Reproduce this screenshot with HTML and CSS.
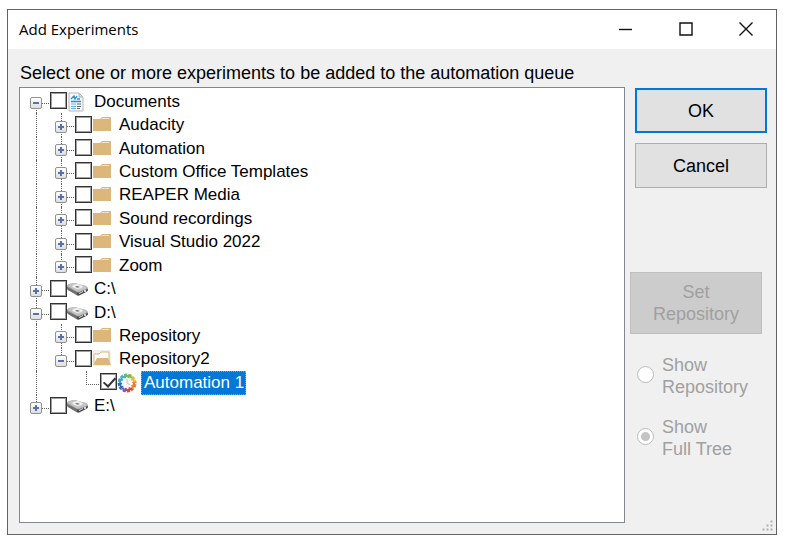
FILE: index.html
```
<!DOCTYPE html>
<html lang="en">
<head>
    <meta charset="UTF-8">
    <meta name="viewport" content="width=device-width, initial-scale=1.0">
    <title>Add Experiments</title>
    <link rel="stylesheet" href="styles.css">
</head>
<body>
    <svg class="sprite" aria-hidden="true">
        <symbol id="folder" viewBox="0 0 18 16">
            <path fill="#dcb67a" d="M0 3h7l2-2h9v14H0z"/>
            <path fill="#f3e3c6" d="M9 2h7v1H8z"/>
        </symbol>
        <symbol id="folder-open" viewBox="0 0 18 16">
            <path fill="#f0eff1" d="M0 0h18v16H0z"/>
            <path fill="#fff" stroke="#dcb67a" d="M1 13V4h5l2-2h8v11"/>
            <path fill="#dcb67a" d="M4 8h11l3 7H0z"/>
        </symbol>
        <symbol id="document" viewBox="0 0 16 20">
            <path fill="#f7f9fa" stroke="#b3b7ba" d="M1 1h10l4 4v14H1z"/>
            <path fill="#d9dcdf" stroke="#b3b7ba" d="M11 1v4h4z"/>
            <path fill="none" stroke="#1e90e0" stroke-width="1.3" d="M3 7l3-3 1 3 2-3M9 7h3M3 9.500h10"/>
            <path fill="none" stroke="#5eb4ee" d="M3 12h5M3 14.500h5M3 16.500h5"/>
            <path fill="none" stroke="#5b6a74" d="M9 12h4M9 14.500h4M9 16.500h3"/>
        </symbol>
        <symbol id="drive" viewBox="0 0 21 14">
            <path fill="#a2a2a2" d="M0 4q0-1 2-2l5-1q2 0 4 1l8 2q2 1 2 3v1q0 1-2 2l-6 3q-2 1-4 0L1 8Q0 7 0 6z"/>
            <path fill="#4c4c4c" d="M10 10q1 1 3 0l8-3v1q0 1-2 2l-6 3q-2 1-3 0z"/>
            <path fill="#6f6f6f" d="M0 5l10 5v3L1 8Q0 7 0 6z"/>
            <path fill="#c4c4c4" d="M1 4q0-1 2-2l5-1 3 1 8 2q2 1 0 3l-6 2q-2 1-4 0z"/>
            <path fill="#efefef" d="M5 4q2-2 5-2 5 1 6 3-2 2-6 2-4-1-5-3z"/>
            <path fill="#8a8a8a" d="M8 4h3l2 1-3 1z"/>
            <path fill="#dedede" d="M12 11l4-2v1l-4 2z"/>
            <circle fill="#fff" cx="18" cy="9" r="1"/>
        </symbol>
        <symbol id="gear" viewBox="0 0 20 20">
            <g fill="none" stroke-width="5">
                <path stroke="#7dbb42" d="M9 3a7 7 0 0 1 6 2"/>
                <path stroke="#f4b52e" d="M15 5a7 7 0 0 1 2 4"/>
                <path stroke="#ef7f2d" d="M17 9a7 7 0 0 1-2 6"/>
                <path stroke="#d9482f" d="M15 15a7 7 0 0 1-5 2"/>
                <path stroke="#8a56a4" d="M10 17a7 7 0 0 1-5-2"/>
                <path stroke="#2f6db5" d="M5 15a7 7 0 0 1-2-5"/>
                <path stroke="#3f9fe0" d="M3 10a7 7 0 0 1 2-5"/>
                <path stroke="#45b5b0" d="M5 5a7 7 0 0 1 4-2"/>
            </g>
            <circle cx="10" cy="10" r="9" fill="none" stroke="#fff" stroke-width="2" stroke-dasharray="1.300 3.412"/>
            <circle cx="10" cy="10" r="5" fill="#f6f6f6"/>
            <circle cx="10" cy="10" r="5" fill="none" stroke="#fff" stroke-width="2" stroke-dasharray="1.500 1.640"/>
            <path stroke="#c4c4c4" fill="none" d="M10 6v4l3 2"/>
        </symbol>
    </svg>

    <div class="window">
        <header class="titlebar">
            <h1>Add Experiments</h1>
            <div class="window-buttons">
                <button type="button" aria-label="Minimize"><svg width="14" height="14"><path d="M0 7.500h13"/></svg></button>
                <button type="button" aria-label="Maximize"><svg width="14" height="14"><path d="M1 1h12v12H1z"/></svg></button>
                <button type="button" aria-label="Close"><svg width="14" height="14"><path d="M0.500 0.500l13 13M13.500 0.500l-13 13"/></svg></button>
            </div>
        </header>

        <main class="content">
            <p class="prompt" id="prompt">Select one or more experiments to be added to the automation queue</p>

            <div class="columns">
                <div class="tree-box">
                    <ul class="tree" aria-labelledby="prompt">
                        <li>
                            <span class="rail first"><button type="button" class="toggle open" aria-label="Collapse"></button></span>
                            <label><input type="checkbox"><svg class="icon"><use href="#document" x="1" width="16" height="20"/></svg><span class="name">Documents</span></label>
                        </li>
                        <li>
                            <span class="rail pass"></span>
                            <span class="rail"><button type="button" class="toggle" aria-label="Expand"></button></span>
                            <label><input type="checkbox"><svg class="icon"><use href="#folder" x="1" y="1" width="18" height="16"/></svg><span class="name">Audacity</span></label>
                        </li>
                        <li>
                            <span class="rail pass"></span>
                            <span class="rail"><button type="button" class="toggle" aria-label="Expand"></button></span>
                            <label><input type="checkbox"><svg class="icon"><use href="#folder" x="1" y="1" width="18" height="16"/></svg><span class="name">Automation</span></label>
                        </li>
                        <li>
                            <span class="rail pass"></span>
                            <span class="rail"><button type="button" class="toggle" aria-label="Expand"></button></span>
                            <label><input type="checkbox"><svg class="icon"><use href="#folder" x="1" y="1" width="18" height="16"/></svg><span class="name">Custom Office Templates</span></label>
                        </li>
                        <li>
                            <span class="rail pass"></span>
                            <span class="rail"><button type="button" class="toggle" aria-label="Expand"></button></span>
                            <label><input type="checkbox"><svg class="icon"><use href="#folder" x="1" y="1" width="18" height="16"/></svg><span class="name">REAPER Media</span></label>
                        </li>
                        <li>
                            <span class="rail pass"></span>
                            <span class="rail"><button type="button" class="toggle" aria-label="Expand"></button></span>
                            <label><input type="checkbox"><svg class="icon"><use href="#folder" x="1" y="1" width="18" height="16"/></svg><span class="name">Sound recordings</span></label>
                        </li>
                        <li>
                            <span class="rail pass"></span>
                            <span class="rail"><button type="button" class="toggle" aria-label="Expand"></button></span>
                            <label><input type="checkbox"><svg class="icon"><use href="#folder" x="1" y="1" width="18" height="16"/></svg><span class="name">Visual Studio 2022</span></label>
                        </li>
                        <li>
                            <span class="rail pass"></span>
                            <span class="rail last"><button type="button" class="toggle" aria-label="Expand"></button></span>
                            <label><input type="checkbox"><svg class="icon"><use href="#folder" x="1" y="1" width="18" height="16"/></svg><span class="name">Zoom</span></label>
                        </li>
                        <li>
                            <span class="rail"><button type="button" class="toggle" aria-label="Expand"></button></span>
                            <label><input type="checkbox"><svg class="icon"><use href="#drive" y="3" width="21" height="14"/></svg><span class="name">C:\</span></label>
                        </li>
                        <li>
                            <span class="rail"><button type="button" class="toggle open" aria-label="Collapse"></button></span>
                            <label><input type="checkbox"><svg class="icon"><use href="#drive" y="3" width="21" height="14"/></svg><span class="name">D:\</span></label>
                        </li>
                        <li>
                            <span class="rail pass"></span>
                            <span class="rail"><button type="button" class="toggle" aria-label="Expand"></button></span>
                            <label><input type="checkbox"><svg class="icon"><use href="#folder" x="1" y="1" width="18" height="16"/></svg><span class="name">Repository</span></label>
                        </li>
                        <li>
                            <span class="rail pass"></span>
                            <span class="rail last"><button type="button" class="toggle open" aria-label="Collapse"></button></span>
                            <label><input type="checkbox"><svg class="icon"><use href="#folder-open" x="1" y="1" width="18" height="16"/></svg><span class="name">Repository2</span></label>
                        </li>
                        <li>
                            <span class="rail pass"></span>
                            <span class="rail blank"></span>
                            <span class="rail last"></span>
                            <label><input type="checkbox" checked><svg class="icon"><use href="#gear" width="20" height="20"/></svg><span class="name selected">Automation 1</span></label>
                        </li>
                        <li>
                            <span class="rail last"><button type="button" class="toggle" aria-label="Expand"></button></span>
                            <label><input type="checkbox"><svg class="icon"><use href="#drive" y="3" width="21" height="14"/></svg><span class="name">E:\</span></label>
                        </li>
                    </ul>
                </div>

                <div class="side">
                    <div class="actions">
                        <button type="button" class="btn default">OK</button>
                        <button type="button" class="btn">Cancel</button>
                    </div>
                    <button type="button" class="btn set-repository" disabled>Set<br>Repository</button>
                    <div class="view-options">
                        <label><input type="radio" name="view" disabled><span>Show<br>Repository</span></label>
                        <label><input type="radio" name="view" checked disabled><span>Show<br>Full Tree</span></label>
                    </div>
                </div>
            </div>
        </main>

        <svg class="grip" width="12" height="12" aria-hidden="true">
            <path d="M8 0h3v3H8zM4 4h3v3H4zM8 4h3v3H8zM0 8h3v3H0zM4 8h3v3H4zM8 8h3v3H8z"/>
        </svg>
    </div>
</body>
</html>
```
FILE: styles.css
```
* {
    box-sizing: border-box;
}
body {
    margin: 0;
    min-height: 100vh;
    padding: 9px 9px 6px 7px;
    display: flex;
    background-color: #fff;
    color: #000;
    font-family: "Liberation Sans", Arial, sans-serif;
    font-size: 17px;
    line-height: 22px;
}
button {
    font: inherit;
    color: inherit;
}
.sprite {
    position: absolute;
    width: 0;
    height: 0;
}
.window {
    position: relative;
    flex: 1;
    display: flex;
    flex-direction: column;
    border: 1px solid #646464;
    background-color: #f0f0f0;
}
.titlebar {
    display: flex;
    justify-content: space-between;
    height: 39px;
    padding-left: 11px;
    background-color: #fff;
}
.titlebar h1 {
    margin: 0;
    font-family: "Open Sans", "Noto Sans", sans-serif;
    font-size: 15px;
    font-weight: normal;
    line-height: 38px;
}
.window-buttons {
    display: flex;
}
.window-buttons button {
    display: flex;
    align-items: center;
    justify-content: center;
    width: 60px;
    padding: 0 0 2px;
    border: none;
    background: none;
}
.window-buttons path {
    fill: none;
    stroke: #111;
    stroke-width: 1.4;
}
.content {
    flex: 1;
    display: flex;
    flex-direction: column;
    padding: 13px 9px 11px 11px;
}
.prompt {
    margin: 0 0 3px;
    padding-left: 1px;
    font-size: 18px;
}
.columns {
    flex: 1;
    display: flex;
    gap: 5px;
}
.tree-box {
    flex: 1;
    padding: 2px 4px;
    border: 1px solid #828790;
    background-color: #fff;
}

/* Tree */
.tree {
    display: grid;
    grid-template-rows: repeat(14, 1fr);
    height: 328px;
    margin: 0;
    padding: 0;
    list-style: none;
}
.tree li {
    display: flex;
}
.tree label {
    display: flex;
    align-items: center;
}
.rail {
    position: relative;
    display: flex;
    align-items: center;
    width: 25px;
    padding: 3px 0 0 6px;
}
.rail::before {
    content: "";
    position: absolute;
    top: 0;
    bottom: 0;
    left: 12px;
    border-left: 1px dotted #606060;
}
.rail.first::before {
    top: 50%;
}
.rail.last::before {
    bottom: 50%;
}
.rail::after {
    content: "";
    position: absolute;
    top: 13px;
    left: 12px;
    right: 0;
    border-top: 1px dotted #606060;
}
.rail.pass::after,
.rail.blank::before,
.rail.blank::after {
    display: none;
}
.toggle {
    position: relative;
    z-index: 1;
    width: 12px;
    height: 12px;
    padding: 0;
    border: 1px solid #919191;
    border-radius: 2px;
    background: linear-gradient(#5870b0, #5870b0) center / 6px 2px no-repeat,
                linear-gradient(#5870b0, #5870b0) center / 2px 6px no-repeat,
                linear-gradient(#fff, #dedede);
}
.toggle.open {
    background: linear-gradient(#5870b0, #5870b0) center / 6px 2px no-repeat,
                linear-gradient(#fff, #dedede);
}
.tree input {
    appearance: none;
    width: 17px;
    height: 17px;
    margin: 0 0 2px 1px;
    border: 1px solid #333;
    outline: 1px solid #a0a0a0;
    outline-offset: -2px;
    background-color: #fff;
}
.tree input:checked {
    position: relative;
}
.tree input:checked::after {
    content: "";
    position: absolute;
    top: 1px;
    left: 5px;
    width: 5px;
    height: 10px;
    border: solid #333;
    border-width: 0 2px 2px 0;
    transform: rotate(42deg);
}
.icon {
    width: 21px;
    height: 20px;
    flex: none;
}
.name {
    align-self: stretch;
    display: flex;
    align-items: center;
    margin-left: 3px;
    padding: 0 2px 0 3px;
}
.name.selected {
    background-color: #0078d7;
    color: #fff;
    outline: 1px dotted #e0903a;
    outline-offset: -1px;
}

/* Right column */
.side {
    width: 137px;
    display: flex;
    flex-direction: column;
    font-size: 18px;
}
.actions {
    display: flex;
    flex-direction: column;
    gap: 10px;
    margin: 1px 0 0 5px;
}
.btn {
    min-height: 45px;
    padding: 0;
    border: 1px solid #adadad;
    background-color: #e1e1e1;
}
.btn.default {
    border: 2px solid #0078d7;
}
.btn:disabled {
    border-color: #bfbfbf;
    background-color: #ccc;
    color: #a0a0a0;
}
.set-repository {
    min-height: 62px;
    margin: 84px 5px 0 0;
}
.view-options {
    display: flex;
    flex-direction: column;
    gap: 18px;
    margin: 20px 0 0 7px;
    color: #a0a0a0;
}
.view-options label {
    display: flex;
    align-items: center;
    gap: 8px;
}
.view-options input {
    appearance: none;
    width: 17px;
    height: 17px;
    margin: 0 0 3px;
    border: 1px solid #bcbcbc;
    border-radius: 50%;
    background-color: #fff;
}
.view-options input:checked {
    background: radial-gradient(circle, #c4c4c4 4px, #fff 5px);
}
.grip {
    position: absolute;
    right: 2px;
    bottom: 2px;
    fill: #b0b0b0;
    stroke: #f0f0f0;
}
```
